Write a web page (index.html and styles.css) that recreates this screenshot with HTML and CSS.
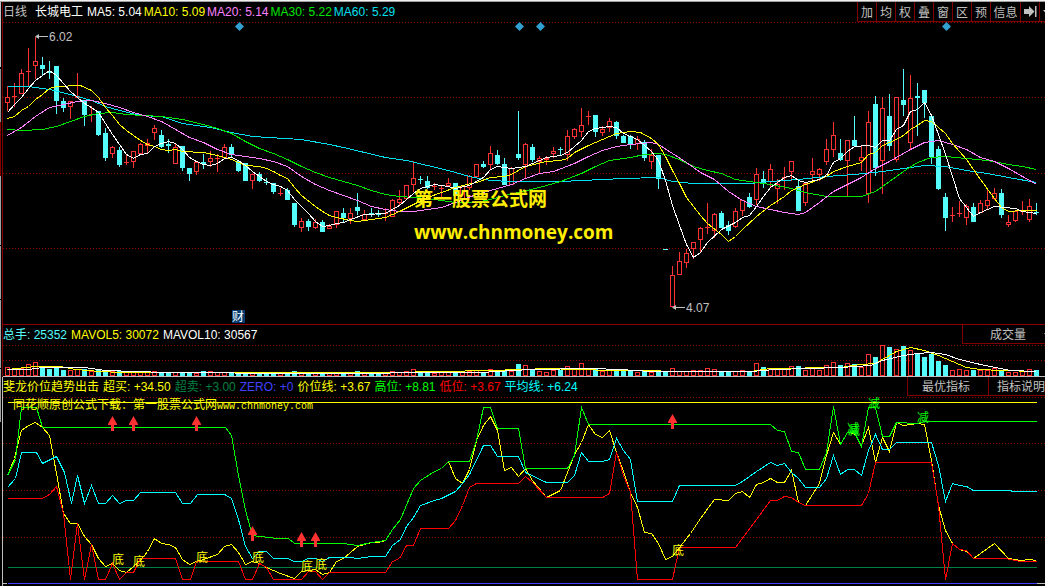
FILE: index.html
```html
<!DOCTYPE html>
<html lang="zh-CN">
<head>
<meta charset="utf-8">
<title>长城电工 日线</title>
<link rel="stylesheet" href="styles.css">
</head>
<body>
<div class="topstrip"></div>
<div class="app">
<div class="rail"></div>
<main class="panels">
<section class="panel">
  <header class="bar bar-main">
    <div class="readout averages">
      <span class="silver wide">日线</span><span class="white name">长城电工</span><span class="white">MA5: 5.04</span><span class="yellow">MA10: 5.09</span><span class="pink">MA20: 5.14</span><span class="green">MA30: 5.22</span><span class="aqua">MA60: 5.29</span>
    </div>
    <nav class="tools">
      <button>加</button><button>均</button><button>权</button><button>叠</button><button>窗</button><button>区</button><button>预</button><button class="info">信息</button><button aria-label="末端"><svg class="icon" viewBox="0 0 13 11"><path d="M0 3h5V0l5.500 5.500L5 11V8H0zM11 0h1.500v11H11z"/></svg></button><button class="more" aria-label="更多"><svg class="tri" viewBox="0 0 5 3"><path d="M0 0h5L2.500 3z"/></svg></button>
    </nav>
  </header>
  <svg class="chart" viewBox="3 22 1042 303">
    <g class="grid"><path d="M3 22.500H1045M3 97.500H1045M3 173.500H1045M3 248.500H1045"/></g>
    <path class="rule" d="M3 324.500H1045"/>
    <g id="candles"></g>
    <g class="lines" transform="translate(.5 .5)">
      <polyline class="s-aqua" points="7,86 28,86 49,89 70,94 91,100 105,106 119,110 140,115 161,116 182,123 210,127 231,132 252,136 301,139 329,144 343,147 364,152 385,157 406,160 427,165 448,170 469,176 490,180 511,181 560,181 602,179 623,178 658,177 672,181 693,183 750,183 770,181 798,179 826,176 854,174 882,171 903,168 924,165 945,166 966,170 987,173 1008,177 1036,182"/>
      <polyline class="s-green" points="7,129 21,130 42,129 56,126 70,121 84,116 98,113 112,112 126,114 161,116 182,119 203,124 217,128 231,133 245,141 259,148 273,153 287,159 301,166 315,172 329,177 343,181 357,185 371,190 385,194 399,196 413,197 427,198 441,200 455,202 476,202 490,199 504,195 518,192 539,187 560,181 581,173 595,166 609,160 630,157 644,154 658,153 665,154 679,159 693,166 707,170 721,173 735,179 749,181 770,184 791,188 805,192 826,196 861,196 875,191 889,181 903,171 917,162 931,157 945,156 966,158 987,160 1008,164 1022,166 1036,169"/>
      <polyline class="s-pink" points="7,135 21,127 35,116 49,107 63,104 77,101 91,100 105,103 119,107 133,112 147,116 161,121 175,129 189,137 203,142 217,149 231,154 245,156 259,158 273,161 287,166 301,176 315,184 329,190 343,195 357,200 371,206 385,209 399,211 413,211 427,209 441,207 455,202 476,194 497,188 511,184 525,178 539,173 553,171 574,163 588,156 602,150 616,146 630,144 651,142 658,144 672,153 686,162 700,172 714,179 728,191 742,200 756,206 770,209 784,212 798,214 805,212 819,202 833,191 847,184 861,177 875,168 889,161 903,153 910,149 924,142 938,140 952,144 966,149 980,157 994,161 1008,168 1022,176 1036,184"/>
      <polyline class="s-yellow" points="7,118 14,116 21,110 28,106 35,99 42,94 49,88 56,86 80,85 91,90 98,97 105,107 112,115 119,124 126,130 133,135 140,140 147,144 154,146 161,149 168,150 175,149 182,151 203,152 217,155 231,159 245,165 259,166 266,168 273,171 280,175 287,178 294,187 301,195 315,206 322,211 329,215 336,217 350,220 357,221 371,219 385,217 399,211 413,204 427,197 441,192 455,187 462,185 476,182 490,177 504,176 511,174 525,166 546,161 560,160 567,158 574,152 588,145 602,139 616,133 630,131 640,132 651,138 658,144 665,156 672,170 679,183 686,197 693,206 700,215 707,223 721,234 728,241 735,236 742,229 756,216 770,205 784,196 791,190 805,184 819,179 826,176 833,171 847,166 861,162 868,154 875,152 882,145 896,139 903,135 910,129 917,125 924,120 931,121 945,133 952,143 959,151 966,159 980,179 994,198 1001,207 1008,211 1022,210 1036,210"/>
      <polyline class="s-white" points="7,112 14,104 21,97 28,88 35,80 42,75 49,70 56,75 63,83 70,91 77,97 84,103 91,107 98,112 105,123 112,134 119,144 126,154 133,158 140,154 147,153 154,146 161,143 168,141 175,143 182,149 189,157 196,161 203,164 210,165 217,163 224,158 231,157 238,160 245,165 252,171 259,176 266,181 273,184 280,186 287,190 294,199 301,206 308,213 315,221 322,226 329,225 336,223 343,222 350,219 364,214 385,213 399,205 413,193 420,188 434,184 448,186 455,188 469,185 483,177 490,169 497,166 511,168 525,166 532,163 546,157 560,155 567,152 574,146 581,140 588,131 595,128 609,126 616,127 623,133 637,139 644,145 651,151 658,160 665,180 672,205 679,225 686,244 693,257 700,252 707,242 721,229 735,222 742,217 749,215 756,206 763,196 770,187 777,182 784,177 791,175 798,180 805,182 819,179 826,175 833,162 840,158 847,151 854,146 868,145 875,147 882,140 889,140 896,129 903,125 910,111 917,109 924,102 931,115 938,134 945,154 952,176 959,198 966,207 973,216 980,212 994,206 1015,208 1022,211 1036,213"/>
    </g>
    <path class="diamond" d="M239.500 22l4.500 4.500-4.500 4.500-4.500-4.500zM519.500 22l4.500 4.500-4.500 4.500-4.500-4.500zM540.500 22l4.500 4.500-4.500 4.500-4.500-4.500zM946.500 22l4.500 4.500-4.500 4.500-4.500-4.500z"/>
    <path class="pointer" d="M35 36.500l4-2.500v2h9v1h-9v2zM672 307.500l4-2.500v2h9v1h-9v2z"/>
    <text class="note" x="49" y="41">6.02</text>
    <text class="note" x="686" y="312">4.07</text>
    <rect class="badge" x="232" y="310" width="13" height="13"/>
    <text class="badge-text" x="232" y="321">财</text>
    <text class="mark" x="414" y="206">第一股票公式网</text>
    <text class="mark mark-url" x="414" y="239">www.chnmoney.com</text>
  </svg>
</section>
<section class="panel">
  <header class="bar">
    <div class="readout"><span class="cyan">总手: 25352</span><span class="yellow">MAVOL5: 30072</span><span class="white">MAVOL10: 30567</span></div>
    <nav class="tools"><button class="volume">成交量</button><button class="more plain" aria-label="更多"><svg class="tri" viewBox="0 0 5 3"><path d="M0 0h5L2.500 3z"/></svg></button></nav>
  </header>
  <svg class="chart" viewBox="3 344 1042 33">
    <g class="grid"><path d="M3 345.500H1045M3 360.500H1045"/></g>
    <g id="volumes"></g>
    <g class="lines" transform="translate(.5 .5)">
      <polyline class="s-yellow" points="7,369 35,366 60,366 75,369 100,371 120,372 340,372 390,372 440,371 490,370 520,369 550,368 570,369 620,370 700,371 750,371 770,368 840,367 860,364 875,363 882,359 889,355 896,351 903,349 910,347 924,350 938,355 952,361 966,367 980,369 1000,370 1036,371"/>
      <polyline class="s-white" points="7,369 28,369 42,367 84,367 105,370 135,371 165,372 300,373 340,373 440,372 480,372 530,369 590,368 620,369 650,371 750,371 775,369 840,367 870,365 882,360 903,355 917,353 931,352 945,354 959,359 980,364 1000,368 1010,370 1036,371"/>
    </g>
    <path class="base" d="M3 376.500H1045"/>
  </svg>
</section>
<section class="panel panel-signal">
  <header class="bar">
    <div class="readout"><span class="yellow">斐龙价位趋势出击</span><span class="yellow">超买: +34.50</span><span class="sea">超卖: +3.00</span><span class="blue">ZERO: +0</span><span class="yellow">价位线: +3.67</span><span class="lime">高位: +8.81</span><span class="red">低位: +3.67</span><span class="cyan2">平均线: +6.24</span></div>
    <nav class="tools"><button class="best">最优指标</button><button class="about">指标说明</button></nav>
  </header>
  <svg class="chart" viewBox="3 396 1042 190">
    <g class="grid"><path d="M3 397.500H1045M3 443.500H1045M3 490.500H1045M3 537.500H1045"/></g>
    <path class="base" d="M3 583.500H7M1037 583.500H1045"/>
    <g class="lines" transform="translate(.5 .5)">
      <path class="s-yellow" d="M7 402H1036"/>
      <path class="s-sea" d="M7 567H1036"/>
      <path class="s-blue" d="M7 583H1036"/>
      <polyline class="s-yellow" points="7,475 14,458 21,430 28,425 35,422 42,427 49,435 56,473 63,513 70,523 77,523 84,536 91,544 98,558 105,566 112,563 119,570 126,572 133,566 140,560 147,551 154,538 161,543 168,544 175,547 182,559 189,564 196,561 203,559 217,554 224,546 231,544 238,552 245,564 252,561 259,563 266,567 273,570 280,573 294,578 301,571 315,569 322,574 329,572 336,561 343,558 357,546 371,542 378,542 385,540 392,529 400,519 413,488 420,480 434,471 441,468 448,461 455,478 462,483 469,469 476,440 483,425 490,416 497,430 504,470 511,467 518,476 525,468 532,480 546,497 560,490 567,472 574,454 581,442 588,424 595,434 602,437 609,430 616,452 623,471 630,492 637,507 644,532 651,533 658,543 665,559 672,556 679,547 690,533 700,518 714,499 728,500 735,493 742,491 749,497 756,484 763,482 770,478 777,482 784,482 791,470 798,502 805,505 819,483 826,455 833,432 840,444 847,432 854,433 861,445 868,427 875,462 882,437 889,451 896,422 903,425 917,423 924,424 931,460 938,505 945,530 952,543 959,549 966,551 973,558 980,553 994,543 1008,558 1020,560 1029,559 1036,560"/>
      <polyline class="s-lime" points="7,475 15,459 21,407 36,407 42,427 225,427 231,435 238,475 245,510 252,535 258,536 270,537 275,538 288,538 294,543 343,543 357,545 371,542 385,540 392,529 400,519 413,488 420,480 434,471 441,468 448,461 469,461 476,440 483,407 490,407 497,428 518,428 525,468 567,468 574,455 581,407 588,424 770,424 777,430 784,431 791,451 798,452 805,469 819,469 826,452 833,406 840,444 847,432 854,432 861,446 868,407 875,407 882,436 889,436 896,422 917,423 924,421 1036,421"/>
      <polyline class="s-cyan" points="7,487 15,478 21,452 36,452 42,463 56,456 64,472 71,503 77,475 84,503 91,485 98,503 105,503 112,495 119,503 126,500 133,500 140,492 175,492 182,503 190,503 197,494 224,494 231,498 238,519 245,546 252,558 259,551 266,551 273,558 287,558 294,561 301,561 308,558 315,558 322,561 329,557 350,557 357,558 371,556 385,556 392,545 400,539 406,526 413,517 420,505 434,500 441,498 455,491 462,483 469,474 483,445 490,445 497,456 518,456 525,472 546,482 567,482 574,475 581,452 588,461 602,461 609,459 616,438 623,450 630,459 637,501 672,501 679,485 735,485 742,481 756,471 770,462 777,465 784,463 791,472 798,478 805,487 819,487 826,478 833,455 840,474 847,469 854,469 861,475 868,450 875,434 882,449 889,449 896,442 931,442 938,465 945,501 952,483 959,485 966,486 973,490 1010,490 1012,491 1036,491"/>
      <polyline class="s-red" points="7,498 42,498 49,494 56,486 63,513 70,579 77,523 84,579 91,544 98,579 105,579 112,563 119,579 126,572 133,572 140,558 175,558 182,579 190,579 196,561 238,561 245,579 252,579 259,563 266,567 273,579 301,579 308,571 315,571 322,579 329,572 385,572 392,561 399,558 406,545 413,545 420,528 448,528 455,520 462,505 469,487 476,483 518,483 525,476 532,482 546,497 602,497 609,493 616,452 623,475 630,492 637,579 672,579 679,547 735,547 756,519 770,500 777,500 784,496 791,497 798,502 805,505 861,505 868,493 875,462 931,462 938,505 945,579 952,543 959,549 966,550 973,558 1005,558 1020,561 1036,561"/>
    </g>
    <g id="arrows"></g>
    <g class="low"><text x="112" y="564">底</text><text x="133" y="566">底</text><text x="196" y="562">底</text><text x="252" y="562">底</text><text x="301" y="571">底</text><text x="315" y="569">底</text><text x="672" y="555">底</text></g>
    <g class="cut"><text x="847" y="433">减</text><text x="848" y="435">减</text><text x="868" y="408">减</text><text x="917" y="422">减</text></g>
    <text class="source" x="13" y="409">同花顺原创公式下载：第一股票公式网<tspan class="mono">www.chnmoney.com</tspan></text>
  </svg>
</section>
</main>
</div>
<script src="chart.js"></script>
</body>
</html>
```
FILE: styles.css
```css
* { box-sizing: border-box; }
body {
  margin: 0;
  background: #000;
  color: #c0c0c0;
  font: 12px/18px "Liberation Sans", "Noto Sans CJK SC", sans-serif;
  overflow: hidden;
}
.topstrip { height: 2px; background: #f0f0f0; border-bottom: 1px solid #a0a0a0; }
.app { display: grid; grid-template-columns: 2px minmax(0, 1fr); }
.rail {
  border-right: 1px solid #000;
  background: linear-gradient(#c0c0c0 65px, #000 65px 67px, #909090 67px 120px, #800000 120px 174px, #a0a0a0 174px 243px, #000 243px 244px, #a0a0a0 244px 297px, #000 297px 298px, #a0a0a0 298px 366px, #000 366px 367px, #a0a0a0 367px 420px, #000 420px);
}
.panel { border-left: 1px solid #800000; }
.panel-signal { border-left-color: #c0c0c0; }
.bar { display: flex; justify-content: space-between; height: 19px; overflow: hidden; white-space: nowrap; }
.bar-main { height: 20px; }
.readout { display: flex; gap: 4px; line-height: 20px; }
.averages { gap: 2px; }
.wide { margin-right: 6px; }
.name { margin-right: 2px; }
.tools { display: flex; flex: none; border-left: 1px solid #800000; border-bottom: 1px solid #800000; }
.tools button {
  flex: none;
  width: 19px;
  padding: 0;
  border: 0;
  border-right: 1px solid #800000;
  background: #000;
  color: #c0c0c0;
  font: 12px/18px "Noto Sans CJK SC", sans-serif;
}
.tools .info { width: 30px; }
.tools .more { width: 5px; overflow: hidden; border: 0; text-align: left; }
.tools .volume { width: 78px; border: 0; padding-left: 12px; }
.tools .more.plain { width: 4px; }
.tools .best { width: 81px; padding-right: 4px; }
.tools .about { width: 56px; border: 0; padding-left: 8px; }
.icon { display: block; width: 13px; height: 11px; margin: 0 auto; fill: #c0c0c0; }
.tri { display: block; width: 5px; height: 3px; margin-left: 3px; fill: #c0c0c0; }

.silver { color: #c0c0c0; }
.white { color: #fff; }
.yellow { color: #ffff00; }
.pink { color: #ff80ff; }
.green { color: #00e600; }
.aqua { color: #00e0f0; }
.cyan { color: #54fcfc; }
.cyan2 { color: #00ffff; }
.sea { color: #008040; }
.blue { color: #4040ff; }
.lime { color: #00ff00; }
.red { color: #ff0000; }

.chart { display: block; width: 100%; height: auto; }
.grid path { stroke: #900000; stroke-dasharray: 1 2; shape-rendering: crispEdges; }
.rule { stroke: #900000; }
.base { stroke: #c0c0c0; }
.lines { fill: none; shape-rendering: crispEdges; }
.s-white { stroke: #fff; }
.s-yellow { stroke: #ffff00; }
.s-pink { stroke: #ff80ff; }
.s-green { stroke: #00e600; }
.s-aqua { stroke: #00e0f0; }
.s-cyan { stroke: #00ffff; }
.s-lime { stroke: #00ff00; }
.s-red { stroke: #ff0000; }
.s-sea { stroke: #008040; }
.s-blue { stroke: #4040ff; }
.up { fill: none; stroke: #ff3232; shape-rendering: crispEdges; }
.down { fill: #54fcfc; shape-rendering: crispEdges; }
.arrow { fill: #ff3232; }
.diamond { fill: #30a0d0; }
.pointer, .note { fill: #c0c0c0; }
.badge { fill: #003a70; }
.badge-text { fill: #fff; }
.mark { fill: #ffee00; font: bold 19px "Noto Sans CJK SC", sans-serif; }
.mark-url { font: bold 19px "Open Sans", sans-serif; }
.low, .source { fill: #ffff00; }
.cut { fill: #00ff00; }
.mono { font-family: "Liberation Mono", monospace; font-size: 10px; }
```
FILE: chart.js
```js
// One entry per day: direction (u/d), then high, body top, body bottom, low.
const days = `u86,97,102,111 u83,96,96,107 u69,73,93,94 u48,71,71,86 u37,61,65,79 d57,65,69,75 d61,71,73,79 d66,66,101,114 d98,101,108,112 u101,101,106,119
u73,96,97,98 d100,100,115,126 u106,114,114,122 d111,111,135,136 d128,133,158,161 u146,147,153,158 d147,150,165,167 u155,162,162,165 u151,151,161,168 u143,144,153,154
u139,143,145,153 u125,128,132,140 d130,135,147,148 d139,144,146,153 u143,147,163,164 d146,146,168,171 d168,168,174,181 u162,162,171,175 d154,162,164,169 u151,158,161,167
u154,158,158,172 u144,147,157,158 d144,147,155,157 d160,161,171,172 d163,163,181,181 u174,174,180,189 d172,174,181,182 d178,182,183,185 d183,183,192,194 u188,193,193,196
d188,190,200,200 d203,203,225,227 u218,221,227,232 d219,221,227,231 u219,222,227,229 d220,222,232,232 u224,226,228,229 u211,211,224,228 d208,213,218,222 u208,213,218,224
d193,207,211,215 u210,214,219,220 d208,213,214,217 d210,213,215,217 u208,213,213,221 u199,200,216,217 u190,199,202,206 u185,185,198,199 u161,178,184,192 d176,179,180,184
d176,181,188,189 u183,186,186,190 u186,188,188,197 u178,183,185,187 d183,183,196,196 u186,186,199,200 u175,176,187,190 u164,164,176,177 d161,164,167,168 u146,153,164,170
d150,155,164,165 d158,164,185,185 u167,168,184,185 d111,154,158,160 u143,144,164,178 d144,147,160,162 u156,158,161,173 u156,158,159,165 u147,151,153,158 d147,149,150,155
u130,136,154,161 u128,129,136,139 u108,125,131,137 u111,116,116,125 d115,115,132,137 u126,129,132,136 u118,121,127,132 d121,122,136,139 d135,136,143,143 d135,136,144,149
u136,139,143,150 d140,142,158,161 u149,155,161,169 d155,155,179,189 d249,249,250,250 u266,275,306,307 u252,261,274,275 u249,253,262,268 u242,242,248,259 u227,228,239,253
u203,227,227,234 u213,214,230,238 d211,213,228,228 d221,225,231,235 u208,211,226,228 u200,200,210,216 d193,197,207,208 u168,174,199,205 d171,179,183,188 u164,169,181,188
u179,184,188,204 u167,177,177,190 u161,161,171,181 d180,186,211,211 u182,183,202,206 u158,171,174,180 u168,169,174,181 u139,149,161,165 u122,135,149,157 d139,153,160,161
u140,140,160,196 d116,140,146,146 u146,157,160,171 u111,122,193,203 d96,104,168,176 u97,108,160,194 d94,116,146,151 u97,97,159,162 d69,100,105,116 u75,98,142,149
d83,96,98,136 d90,90,103,118 d114,116,157,164 d146,149,189,190 d193,197,218,231 u207,215,215,222 u201,213,213,217 u204,206,217,225 d203,207,222,222 u200,203,212,213
u190,200,205,209 u188,193,198,200 d189,193,215,218 u215,222,224,227 u210,211,220,222 u201,211,211,215 u199,206,219,222 d203,212,213,215`.split(/\s+/);

const volumes = [9,7,8,12,14,9,7,9,6,6,7,7,5,6,6,5,5,4,4,4,4,5,4,4,4,4,4,3,5,5,4,4,4,4,4,4,4,3,3,3,4,5,4,3,4,3,3,4,4,3,
5,3,3,3,3,5,4,5,7,4,4,3,4,4,4,4,5,6,4,7,6,6,5,12,11,7,5,4,6,6,10,7,13,7,7,5,6,6,5,5,4,5,4,5,4,8,5,5,6,6,
8,7,5,4,5,6,5,13,9,8,8,8,10,10,6,8,6,11,14,11,13,12,9,22,19,31,29,27,30,26,23,19,22,15,11,6,7,6,6,6,6,8,6,4,4,5,7,6];

const STEP = 7;
const FIRST = 7;
const BASE = 376;

function addPath(host, cls, d) {
  const p = document.createElementNS("http://www.w3.org/2000/svg", "path");
  p.setAttribute("class", cls);
  p.setAttribute("d", d);
  document.getElementById(host).appendChild(p);
}

let up = "", down = "", volUp = "", volDown = "";
days.forEach((day, i) => {
  const x = FIRST + i * STEP;
  const [high, top, bottom, low] = day.slice(1).split(",").map(Number);
  const h = volumes[i];
  if (day[0] === "u") {
    up += `M${x + .5} ${high}V${top}M${x + .5} ${bottom + 1}V${Math.max(low, bottom + 1)}`;
    up += bottom === top ? `M${x - 2} ${top + .5}h5` : `M${x - 1.5} ${top + .5}h4V${bottom + .5}h-4z`;
    if (bottom === top) up += `M${x + .5} ${high}V${low}`;
    volUp += `M${x - 1.5} ${BASE - h + .5}h4V${BASE - .5}h-4z`;
  } else {
    down += `M${x} ${high}h1V${low}h-1zM${x - 2} ${top}h5V${bottom}h-5z`;
    volDown += `M${x - 2} ${BASE - h}h5V${BASE}h-5z`;
  }
});
addPath("candles", "up", up);
// Wick and body are separate paths so overlaps stay filled.
down.split("M").filter(Boolean).forEach(d => addPath("candles", "down", "M" + d));
addPath("volumes", "up", volUp);
addPath("volumes", "down", volDown);

[[112, 416], [133, 416], [196, 416], [252, 526], [301, 532], [315, 532], [672, 414]].forEach(([x, y]) => {
  addPath("arrows", "arrow", `M${x + .5} ${y}l4.500 8v1h-3v6h-3v-6h-3v-1z`);
});
```
